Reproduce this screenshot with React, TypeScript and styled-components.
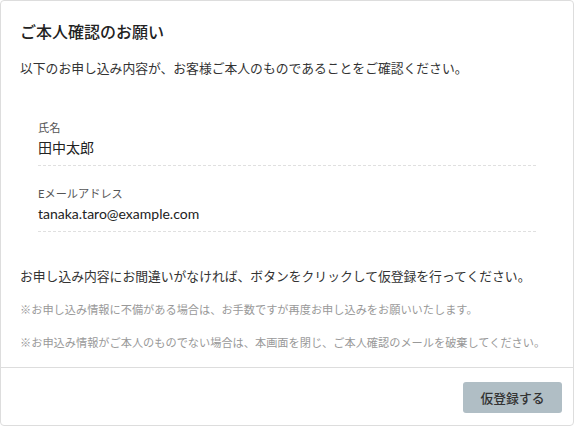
import React from "react";
import styled, { createGlobalStyle } from "styled-components";

const FONT = `Lato, "Noto Sans CJK JP", sans-serif`;

const GlobalStyle = createGlobalStyle`
  html, body {
    margin: 0;
    padding: 0;
    background: #ffffff;
  }
  body {
    font-family: ${FONT};
    color: #333333;
  }
  * { box-sizing: border-box; }
`;

const Card = styled.div`
  width: 574px;
  height: 426px;
  border: 1px solid #dddddd;
  border-radius: 4px;
  display: flex;
  flex-direction: column;
  background: #fff;
`;

const Body = styled.div`
  flex: 1;
  padding: 19px 19px 15px 19px;
  display: flex;
  flex-direction: column;
`;

const Title = styled.h1`
  margin: 0;
  font-size: 16px;
  line-height: 24px;
  font-weight: 500;
  color: #222;
`;

const Lead = styled.p<{ $top: number }>`
  margin: ${(p) => p.$top}px 0 0;
  font-size: 12.8px;
  line-height: 20px;
  color: #333;
`;

const FieldList = styled.dl`
  margin: 41px 18px 0;
  padding: 0;
  display: flex;
  flex-direction: column;
  gap: 19px;
`;

const Field = styled.div`
  border-bottom: 1px dashed #e0e0e0;
  padding-bottom: 7px;
  display: flex;
  flex-direction: column;
  gap: 1px;
`;

const Label = styled.dt`
  font-size: 11.2px;
  line-height: 17px;
  color: #555;
`;

const Value = styled.dd`
  margin: 0;
  font-size: 14px;
  line-height: 21px;
  color: #222;
`;

const Note = styled.p`
  margin: 15px 0 0;
  font-size: 11.2px;
  line-height: 18px;
  color: #999;
`;

const Footer = styled.div`
  border-top: 1px solid #dddddd;
  padding: 14px 11px 12px;
  display: flex;
  justify-content: flex-end;
`;

const Button = styled.button`
  width: 99px;
  height: 31px;
  border: none;
  border-radius: 3px;
  background: #b0bec5;
  color: #333;
  font-family: ${FONT};
  font-size: 12.8px;
  font-weight: 500;
  cursor: pointer;
`;

export default function App() {
  return (
    <>
      <GlobalStyle />
      <Card>
        <Body>
          <Title>ご本人確認のお願い</Title>
          <Lead $top={14}>
            以下のお申し込み内容が、お客様ご本人のものであることをご確認ください。
          </Lead>
          <FieldList>
            <Field>
              <Label>氏名</Label>
              <Value>田中太郎</Value>
            </Field>
            <Field>
              <Label>Eメールアドレス</Label>
              <Value>tanaka.taro@example.com</Value>
            </Field>
          </FieldList>
          <Lead $top={34}>
            お申し込み内容にお間違いがなければ、ボタンをクリックして仮登録を行ってください。
          </Lead>
          <Note>
            ※お申し込み情報に不備がある場合は、お手数ですが再度お申し込みをお願いいたします。
          </Note>
          <Note>
            ※お申込み情報がご本人のものでない場合は、本画面を閉じ、ご本人確認のメールを破棄してください。
          </Note>
        </Body>
        <Footer>
          <Button>仮登録する</Button>
        </Footer>
      </Card>
    </>
  );
}
